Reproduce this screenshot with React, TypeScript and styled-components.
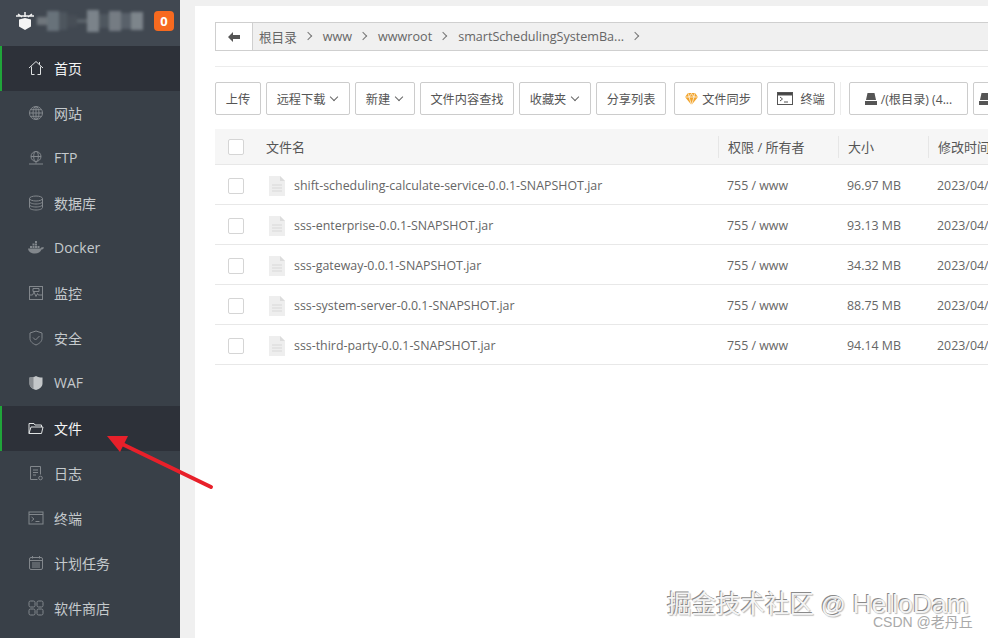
import React from "react";
import styled, {createGlobalStyle} from "styled-components";

const Global = createGlobalStyle`
  html, body {
    margin: 0;
    padding: 0;
    height: 100%;
    overflow: hidden;
    background: #f0f0f0;
    font-family: "Open Sans", "Noto Sans CJK SC", sans-serif;
  }
  * { box-sizing: border-box; }
`;

const Page = styled.div`
  position: relative;
  display: flex;
  width: 988px;
  height: 638px;
  overflow: hidden;
`;

const Sidebar = styled.aside`
  flex: 0 0 180px;
  min-width: 0;
  display: flex;
  flex-direction: column;
  background: #394048;
`;

const Brand = styled.div`
  height: 46px;
  display: flex;
  align-items: center;
  padding: 0 6px 4px 15px;
  background: #414851;
`;

const Mosaic = styled.div`
  flex: 1;
  min-width: 0;
  display: flex;
  align-items: center;
  height: 24px;
  margin-left: 2px;
  margin-right: 8px;
  filter: blur(1.5px);
`;

const MosaicBlock = styled.i<{$w: number; $h: number; $c: string}>`
  display: block;
  width: ${p => p.$w}px;
  height: ${p => p.$h}px;
  background: ${p => p.$c};
`;

const Badge = styled.span`
  flex: 0 0 20px;
  height: 20px;
  border-radius: 4px;
  background: #f76a1f;
  color: #fff;
  font-size: 13px;
  font-weight: 700;
  display: flex;
  align-items: center;
  justify-content: center;
`;

const MenuItem = styled.div<{$active?: boolean}>`
  height: 45px;
  display: flex;
  align-items: center;
  gap: 10px;
  padding-bottom: 2px;
  font-size: 14px;
  color: ${p => (p.$active ? "#f4f5f5" : "#c5cacd")};
  background: ${p => (p.$active ? "#2d3139" : "transparent")};
  border-left: ${p => (p.$active ? "2px solid #20a53a" : "0")};
  padding-left: ${p => (p.$active ? "26px" : "28px")};
  > svg {
    flex: 0 0 16px;
    color: ${p => (p.$active ? "#dfe2e3" : "#82878c")};
  }
`;

const Gutter = styled.div`
  flex: 0 0 15px;
  background: #f0f0f0;
`;

const Main = styled.main`
  flex: 1;
  min-width: 0;
  margin-top: 6px;
  padding: 16px 0 0 20px;
  background: #fff;
  overflow: hidden;
`;

const PathBar = styled.div`
  height: 29px;
  display: flex;
  align-items: stretch;
  background: #f0f0f0;
  border: 1px solid #cfcfcf;
  border-right: 0;
  font-size: 12.6px;
  color: #666;
`;

const BackBtn = styled.div`
  flex: 0 0 37px;
  display: flex;
  align-items: center;
  justify-content: center;
  background: #fff;
  border-right: 1px solid #cfcfcf;
  color: #555;
`;

const Crumb = styled.span`
  display: flex;
  align-items: center;
  margin-left: 6px;
  padding-bottom: 1px;
  white-space: nowrap;
  &::after {
    content: "";
    width: 5px;
    height: 5px;
    margin: 0 6px 0 8px;
    border-top: 1px solid #777;
    border-right: 1px solid #777;
    transform: rotate(45deg);
  }
`;

const Toolbar = styled.div`
  margin-top: 15px;
  padding-top: 15px;
  border-top: 1px solid #ececec;
  display: flex;
  align-items: center;
  gap: 5px;
  white-space: nowrap;
`;

const Btn = styled.div<{$w: number; $after?: number}>`
  flex: 0 0 ${p => p.$w}px;
  height: 33px;
  margin-right: ${p => p.$after ?? 0}px;
  display: flex;
  align-items: center;
  justify-content: center;
  gap: 4px;
  border: 1px solid #ccc;
  border-radius: 2px;
  background: #fff;
  font-size: 12.2px;
  color: #555;
  overflow: hidden;
`;

const Caret = styled.i`
  width: 6px;
  height: 6px;
  margin: -3px 2px 0 2px;
  border-right: 1px solid #666;
  border-bottom: 1px solid #666;
  transform: rotate(45deg);
`;

const Divider = styled.span`
  flex: 0 0 1px;
  height: 33px;
  margin-right: 3px;
  background: #ececec;
`;

const Table = styled.div`
  margin-top: 14px;
`;

const Row = styled.div<{$head?: boolean}>`
  display: grid;
  grid-template-columns: 51px 452px 120px 90px 200px;
  align-items: center;
  height: ${p => (p.$head ? "36px" : "40px")};
  padding-top: ${p => (p.$head ? "0" : "2px")};
  background: ${p => (p.$head ? "#f6f6f6" : "#fff")};
  border-bottom: 1px solid #e8e8e8;
  font-size: 12.4px;
  color: #666;
  white-space: nowrap;
`;

const CheckCell = styled.div`
  padding-left: 13px;
`;

const Check = styled.span`
  display: block;
  width: 16px;
  height: 16px;
  border: 1px solid #d5d5d5;
  border-radius: 2px;
  background: #fff;
`;

const HeadCell = styled.div<{$line?: boolean}>`
  height: 22px;
  line-height: 22px;
  padding-left: ${p => (p.$line ? "9px" : "0")};
  border-left: ${p => (p.$line ? "1px solid #e6e6e6" : "0")};
  color: #555;
  font-size: 13px;
`;

const NameCell = styled.div`
  display: flex;
  align-items: center;
  gap: 9px;
  margin-left: 3px;
`;

const Cell = styled.div`
  padding-left: 9px;
`;

const Overlay = styled.svg`
  position: absolute;
  left: 0;
  top: 0;
  pointer-events: none;
`;

const Watermark = styled.div`
  position: absolute;
  left: 667px;
  top: 593px;
  font-family: "Liberation Sans", "Noto Sans CJK SC", sans-serif;
  font-size: 24.5px;
  line-height: 22px;
  color: #f4f4f4;
  text-shadow: -1px -1px 0 #8a8a8a, 1px 1px 1px #bbb;
  white-space: nowrap;
`;

const WatermarkName = styled.span`
  font-size: 26.5px;
`;

const Credit = styled.div`
  position: absolute;
  left: 873px;
  top: 615px;
  font-family: "Liberation Sans", "Noto Sans CJK SC", sans-serif;
  font-size: 14px;
  line-height: 14px;
  color: #a9a9a9;
  white-space: nowrap;
`;

const Ico = ({children}: {children: React.ReactNode}) => (
    <svg width={16} height={16} viewBox="0 0 16 16" fill="none" stroke="currentColor" strokeWidth="1">
        {children}
    </svg>
);

const icons: { [k: string]: React.ReactNode } = {
    home: <Ico><path d="M1 8 8 1.500 15 8M3.500 6.500V14.500h3M9.500 14.500h3V6.500"/><path d="M11.500 2v2.500" /></Ico>,
    globe: <Ico><circle cx="8" cy="8" r="6.500"/><ellipse cx="8" cy="8" rx="3" ry="6.500"/><path d="M1.500 8h13M2.500 4.700h11M2.500 11.300h11M8 1.500v13"/></Ico>,
    ftp: <Ico><circle cx="8" cy="6.500" r="5"/><ellipse cx="8" cy="6.500" rx="2.300" ry="5"/><path d="M3 6.500h10M8 11.500v2M1 14h14"/></Ico>,
    db: <Ico><ellipse cx="8" cy="3.500" rx="6.500" ry="2.500"/><path d="M1.500 3.500v9c0 1.400 2.900 2.500 6.500 2.500s6.500-1.100 6.500-2.500v-9M1.500 6.500c0 1.400 2.900 2.500 6.500 2.500s6.500-1.100 6.500-2.500M1.500 9.500c0 1.400 2.900 2.500 6.500 2.500s6.500-1.100 6.500-2.500"/></Ico>,
    docker: <Ico>
        <path fill="currentColor" stroke="none" d="M0 8.500h12.500c.5-1 1.500-1.400 3.500-1-.5 1.500-1.500 2-2.500 2-1 2.800-3.500 4-6.500 4-4 0-6.500-1.500-7-5ZM2 6h2v2H2zM4.500 6h2v2h-2zM7 6h2v2H7zM9.500 6h2v2h-2zM4.500 3.500h2v2h-2zM7 3.500h2v2H7zM7 1h2v2H7z"/>
    </Ico>,
    monitor: <Ico><rect x="1.500" y="1.500" width="13" height="13"/><path d="M1.500 10h3l1.500-3 2 4.500 1.500-3 .8 1.500h4.200M5 3.500h6v3H5z"/></Ico>,
    shield: <Ico><path d="M8 1 14 3v5.500c0 3-2.500 5-6 6.500-3.500-1.500-6-3.500-6-6.500V3z"/><path d="m5 7.500 2.500 2.500 4-4"/></Ico>,
    waf: <Ico><path fill="#c4c7c9" stroke="none" d="M8 1c2 1 4 1.500 6.500 1.500v6c0 3-2.500 5.500-6.500 6.500-4-1-6.500-3.500-6.500-6.500v-6C4 2.500 6 2 8 1Z"/><path fill="#8b8f93" stroke="none" d="M5.500 1.800v12.300c-2.500-1.300-4-3.300-4-5.600v-6c1.500 0 2.800-.3 4-.7Z"/></Ico>,
    folder: <Ico><path d="M1 13.500V3.500h5l1 1.500h6.500v2M1 13.500h12.500L15 7H3z" strokeLinejoin="round"/></Ico>,
    log: <Ico><path d="M9.500 14.500h-7v-13h10v8"/><path d="M5 5h5M5 7.500h5M5 10h3"/><circle cx="12.500" cy="13" r="1.800"/></Ico>,
    term: <Ico><rect x="1" y="2" width="14" height="12"/><path d="M1 4.500h14M3.500 7l2.500 2-2.500 2M7.500 11.500h4"/></Ico>,
    cron: <Ico><rect x="1.500" y="2.500" width="13" height="12" rx="1.500"/><path d="M1.500 5.500h13M4.500 1v2.500M11.500 1v2.500M4 8h8M4 10h8M4 12h8" /></Ico>,
    store: <Ico><rect x="1" y="1" width="6" height="6" rx="1.500"/><rect x="9" y="1" width="6" height="6" rx="1.500"/><rect x="1" y="9" width="6" height="6" rx="1.500"/><rect x="9" y="9" width="6" height="6" rx="1.500"/></Ico>,
};

const menus = [
    {icon: "home", label: "首页", active: true},
    {icon: "globe", label: "网站"},
    {icon: "ftp", label: "FTP"},
    {icon: "db", label: "数据库"},
    {icon: "docker", label: "Docker"},
    {icon: "monitor", label: "监控"},
    {icon: "shield", label: "安全"},
    {icon: "waf", label: "WAF"},
    {icon: "folder", label: "文件", active: true},
    {icon: "log", label: "日志"},
    {icon: "term", label: "终端"},
    {icon: "cron", label: "计划任务"},
    {icon: "store", label: "软件商店"},
];

const files = [
    {name: "shift-scheduling-calculate-service-0.0.1-SNAPSHOT.jar", size: "96.97 MB"},
    {name: "sss-enterprise-0.0.1-SNAPSHOT.jar", size: "93.13 MB"},
    {name: "sss-gateway-0.0.1-SNAPSHOT.jar", size: "34.32 MB"},
    {name: "sss-system-server-0.0.1-SNAPSHOT.jar", size: "88.75 MB"},
    {name: "sss-third-party-0.0.1-SNAPSHOT.jar", size: "94.14 MB"},
];

const mosaic = [
    {w: 10, h: 8, c: "#6f767c"},
    {w: 12, h: 20, c: "#68727a"},
    {w: 8, h: 18, c: "#4e565e"},
    {w: 10, h: 12, c: "#474e56"},
    {w: 10, h: 4, c: "#5a6269"},
    {w: 12, h: 22, c: "#7b838a"},
    {w: 10, h: 14, c: "#4f575f"},
    {w: 12, h: 20, c: "#757c83"},
    {w: 10, h: 16, c: "#59616a"},
    {w: 12, h: 18, c: "#7d858b"},
];

const Logo = () => (
    <svg width="20" height="20" viewBox="0 0 20 20">
        <path fill="#f4f4f4" d="M4 8.500 10 7l6 1.500v7L10 19l-6-3.500z"/>
        <path stroke="#f4f4f4" strokeWidth="1.500" d="M1 5l18 0M10 1v5M3 3l4 3M17 3l-4 3"/>
    </svg>
);

const FileIcon = () => (
    <svg width="16" height="20" viewBox="0 0 16 20">
        <path fill="#eeeeee" d="M0 0h11l5 5v15H0z"/>
        <path fill="#dcdcdc" d="M11 0l5 5h-5z"/>
        <path stroke="#d8d8d8" d="M3 9h10M3 12h10M3 15h10"/>
    </svg>
);

const Drive = () => (
    <svg width="12" height="12" viewBox="0 0 12 12">
        <path fill="#555" d="M2.500 0h7L11 7H1z"/>
        <rect x="0" y="8" width="12" height="4" fill="#555"/>
    </svg>
);

const Gem = () => (
    <svg width="13" height="12" viewBox="0 0 13 12">
        <path fill="#f2a42c" d="M3 0h7l3 4-6.500 8L0 4z"/>
        <path stroke="#fff" strokeWidth=".7" fill="none" d="M0 4h13M4 4l2.500 8L9 4M3.500.5 4 4l2.500-3.500L9 4l.5-3.500"/>
    </svg>
);

const TermBtnIcon = () => (
    <svg width="16" height="13" viewBox="0 0 16 13" fill="none" stroke="#555">
        <rect x=".5" y=".5" width="15" height="12"/>
        <path fill="#444" d="M.5.500h15v2.500H.5z"/>
        <path d="m3 5 2.500 2L3 9M7 10h4"/>
    </svg>
);

const App = () => {
    return (
        <Page>
            <Global/>
            <Sidebar>
                <Brand>
                    <Logo/>
                    <Mosaic>
                        {mosaic.map((m, i) => <MosaicBlock key={i} $w={m.w} $h={m.h} $c={m.c}/>)}
                    </Mosaic>
                    <Badge>0</Badge>
                </Brand>
                {menus.map(m =>
                    <MenuItem key={m.label} $active={m.active}>
                        {icons[m.icon]}
                        <span>{m.label}</span>
                    </MenuItem>
                )}
            </Sidebar>
            <Gutter/>
            <Main>
                <PathBar>
                    <BackBtn>
                        <svg width="12" height="10" viewBox="0 0 12 10">
                            <path fill="#555" d="M0 5l5-5v3h7v4H5v3z"/>
                        </svg>
                    </BackBtn>
                    <Crumb>根目录</Crumb>
                    <Crumb>www</Crumb>
                    <Crumb>wwwroot</Crumb>
                    <Crumb>smartSchedulingSystemBa...</Crumb>
                </PathBar>
                <Toolbar>
                    <Btn $w={46}>上传</Btn>
                    <Btn $w={84}>远程下载<Caret/></Btn>
                    <Btn $w={60}>新建<Caret/></Btn>
                    <Btn $w={94}>文件内容查找</Btn>
                    <Btn $w={72}>收藏夹<Caret/></Btn>
                    <Btn $w={70} $after={3}>分享列表</Btn>
                    <Btn $w={88}><Gem/>文件同步</Btn>
                    <Btn $w={68}><TermBtnIcon/>&nbsp;终端</Btn>
                    <Divider/>
                    <Btn $w={119}><Drive/>/(根目录) (4...</Btn>
                    <Btn $w={60}><Drive/>/www</Btn>
                </Toolbar>
                <Table>
                    <Row $head>
                        <CheckCell><Check/></CheckCell>
                        <HeadCell>文件名</HeadCell>
                        <HeadCell $line>权限 / 所有者</HeadCell>
                        <HeadCell $line>大小</HeadCell>
                        <HeadCell $line>修改时间</HeadCell>
                    </Row>
                    {files.map(f =>
                        <Row key={f.name}>
                            <CheckCell><Check/></CheckCell>
                            <NameCell><FileIcon/><span>{f.name}</span></NameCell>
                            <Cell>755 / www</Cell>
                            <Cell>{f.size}</Cell>
                            <Cell>2023/04/</Cell>
                        </Row>
                    )}
                </Table>
            </Main>
            <Overlay width="988" height="638" viewBox="0 0 988 638">
                <path d="M211 487 120 443" stroke="#e8202a" strokeWidth="4" strokeLinecap="round"/>
                <path d="M107 436 128 436 120 452z" fill="#e8202a"/>
            </Overlay>
            <Watermark>掘金技术社区 @ <WatermarkName>HelloDam</WatermarkName></Watermark>
            <Credit>CSDN @老丹丘</Credit>
        </Page>
    )
}

export default App
